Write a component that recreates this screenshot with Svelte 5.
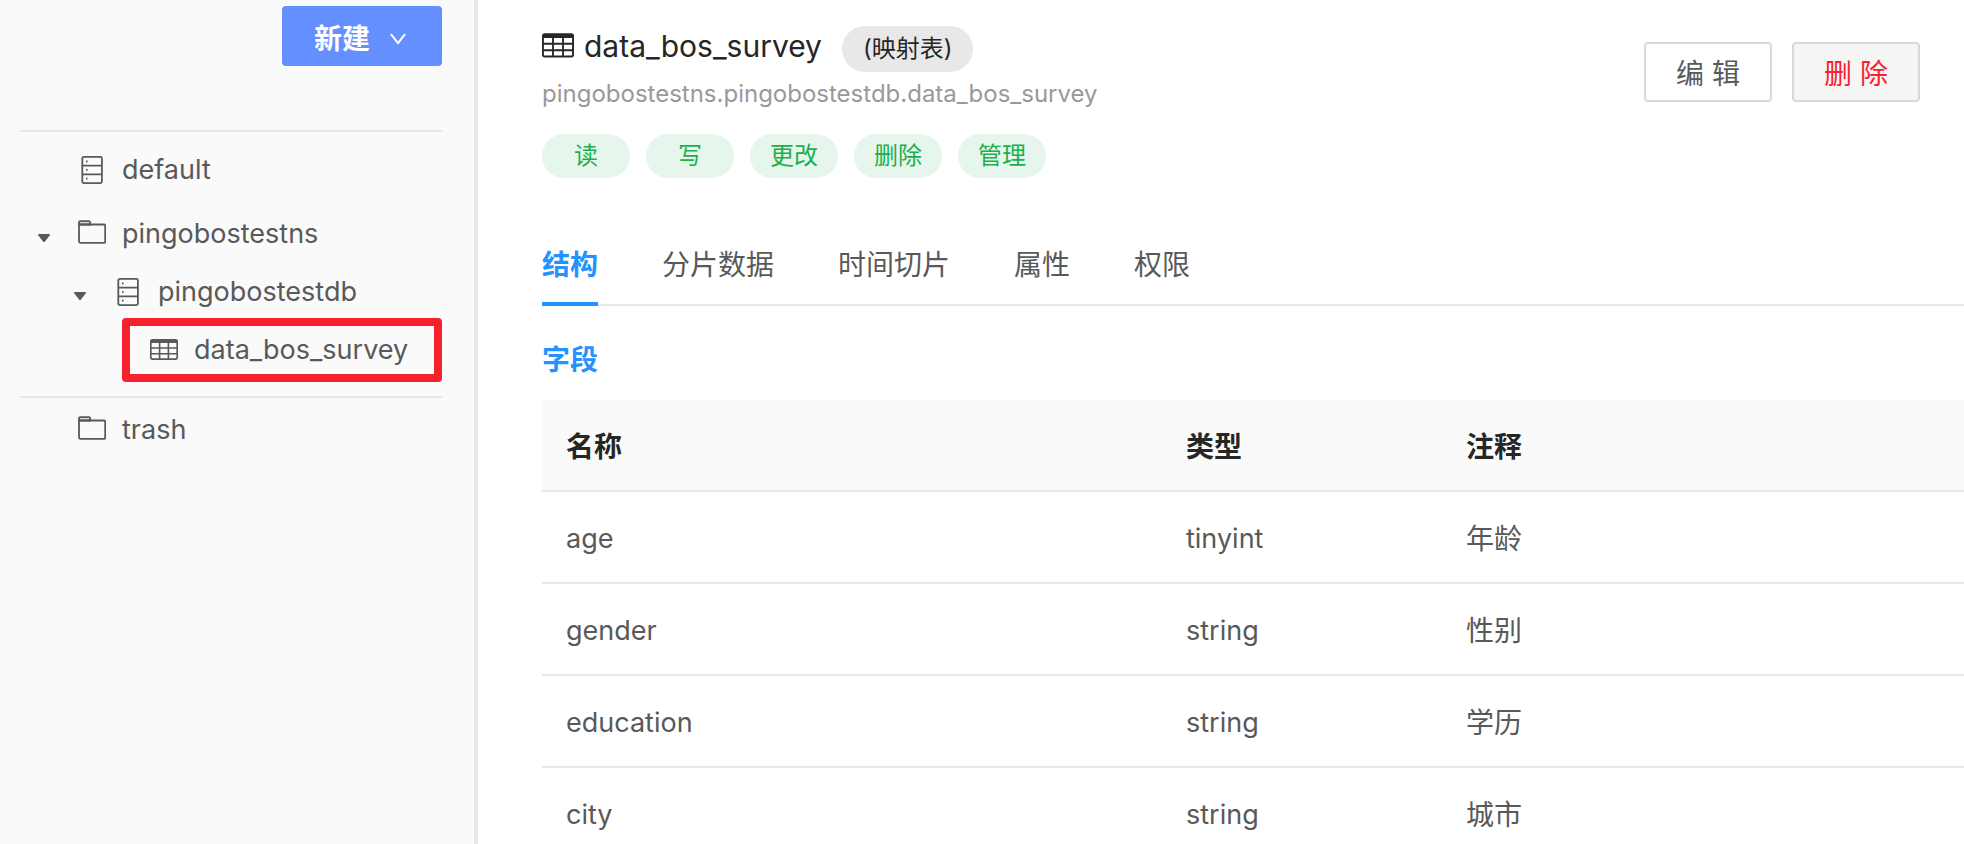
<script lang="ts">
    const tags = ["读", "写", "更改", "删除", "管理"];
    const tabs = ["结构", "分片数据", "时间切片", "属性", "权限"];
    const fields = [
        { name: "age", type: "tinyint", comment: "年龄" },
        { name: "gender", type: "string", comment: "性别" },
        { name: "education", type: "string", comment: "学历" },
        { name: "city", type: "string", comment: "城市" },
    ];

    let active = $state("结构");
    let nsOpen = $state(true);
    let dbOpen = $state(true);
</script>

{#snippet tableIcon(size)}
    <svg class="icon" width={size} height={size} viewBox="0 0 28 28" fill="none" stroke="currentColor" aria-hidden="true">
        <rect x="0.8" y="3.8" width="26.4" height="19.4" rx="1.5" stroke-width="1.7" />
        <path d="M1 5.3H27" stroke-width="3.4" />
        <path d="M1 12H27M1 17.7H27M9.6 6V23M18.4 6V23" stroke-width="1.6" />
    </svg>
{/snippet}

{#snippet folderIcon()}
    <svg class="icon" width="28" height="28" viewBox="0 0 28 28" fill="none" stroke="currentColor" stroke-width="1.8" aria-hidden="true">
        <path d="M1 5V2.5Q1 1.2 2.2 1.2H11Q12.2 1.2 12.2 2.5V4.5H1Z" fill="#ddd" />
        <path d="M1 4.5H26Q27.2 4.5 27.2 5.7V21.6Q27.2 22.8 26 22.8H2.2Q1 22.8 1 21.6Z" />
    </svg>
{/snippet}

{#snippet dbIcon()}
    <svg class="icon" width="28" height="28" viewBox="0 0 28 28" fill="none" stroke="currentColor" stroke-width="1.8" aria-hidden="true">
        <rect x="4.3" y="0.9" width="19.6" height="26.2" rx="1.5" />
        <path d="M4 9.7H24M4 18.3H24" />
        <path d="M8 5.4H9.6M8 13.9H9.6M8 22.6H9.6" />
    </svg>
{/snippet}

{#snippet caret()}
    <svg width="12" height="28" viewBox="0 0 12 28" fill="currentColor" aria-hidden="true">
        <path d="M0.6 14H11.4Q12.4 14.2 11.8 15.2L7 21.6Q6 22.6 5 21.6L0.2 15.2Q-0.4 14.2 0.6 14Z" />
    </svg>
{/snippet}

<div class="layout">
    <aside>
        <div class="toolbar">
            <button class="create">
                新建
                <svg width="16" height="12" viewBox="0 0 16 12" fill="none" stroke="currentColor" stroke-width="2" aria-hidden="true">
                    <path d="M1 1.2L8 10.2L15 1.2" />
                </svg>
            </button>
        </div>
        <ul class="tree">
            <li>
                <div class="row">
                    <span class="toggle"></span>
                    {@render dbIcon()}
                    <a href="#default">default</a>
                </div>
            </li>
            <li>
                <div class="row">
                    <button class="toggle" aria-label="pingobostestns" aria-expanded={nsOpen} onclick={() => (nsOpen = !nsOpen)}>
                        {@render caret()}
                    </button>
                    {@render folderIcon()}
                    <a href="#pingobostestns">pingobostestns</a>
                </div>
                {#if nsOpen}
                    <ul class="children">
                        <li>
                            <div class="row">
                                <button class="toggle" aria-label="pingobostestdb" aria-expanded={dbOpen} onclick={() => (dbOpen = !dbOpen)}>
                                    {@render caret()}
                                </button>
                                {@render dbIcon()}
                                <a href="#pingobostestdb">pingobostestdb</a>
                            </div>
                            {#if dbOpen}
                                <div class="row selected">
                                    {@render tableIcon(28)}
                                    <a href="#data_bos_survey">data_bos_survey</a>
                                </div>
                            {/if}
                        </li>
                    </ul>
                {/if}
            </li>
        </ul>
        <div class="row trash">
            <span class="toggle"></span>
            {@render folderIcon()}
            <a href="#trash">trash</a>
        </div>
    </aside>

    <main>
        <header>
            <div class="info">
                <div class="title">
                    <h1>
                        {@render tableIcon(32)}
                        data_bos_survey
                    </h1>
                    <span class="kind">(映射表)</span>
                </div>
                <div class="path">pingobostestns.pingobostestdb.data_bos_survey</div>
                <div class="tags">
                    {#each tags as tag}
                        <span class="tag">{tag}</span>
                    {/each}
                </div>
            </div>
            <div class="actions">
                <button>编 辑</button>
                <button class="danger">删 除</button>
            </div>
        </header>

        <div class="tabs" role="tablist">
            {#each tabs as tab}
                <button role="tab" class:active={tab === active} aria-selected={tab === active} onclick={() => (active = tab)}>{tab}</button>
            {/each}
        </div>

        <h2>字段</h2>
        <table>
            <thead>
                <tr>
                    <th class="name">名称</th>
                    <th class="type">类型</th>
                    <th>注释</th>
                </tr>
            </thead>
            <tbody>
                {#each fields as field}
                    <tr>
                        <td>{field.name}</td>
                        <td>{field.type}</td>
                        <td>{field.comment}</td>
                    </tr>
                {/each}
            </tbody>
        </table>
    </main>
</div>

<style>
    :global(body) {
        margin: 0;
    }

    .layout {
        display: flex;
        height: 100vh;
        font-family: Inter, "Noto Sans CJK SC", sans-serif;
        font-size: 27px;
        line-height: 40px;
        color: #595959;
        background: #fff;
    }

    button {
        font: inherit;
        color: inherit;
        cursor: pointer;
    }

    a {
        color: inherit;
        text-decoration: none;
    }

    .icon {
        flex: none;
    }

    aside {
        flex: none;
        box-sizing: border-box;
        width: 478px;
        padding: 6px 32px 0 20px;
        border-right: 4px solid #e8e8e8;
        background: #fafafa;
    }

    .toolbar {
        display: flex;
        justify-content: flex-end;
        padding-bottom: 64px;
    }

    .create {
        display: flex;
        align-items: center;
        gap: 20px;
        height: 60px;
        padding: 6px 36px 0 32px;
        border: 0;
        border-radius: 4px;
        background: #648fff;
        color: #fff;
        font-size: 28px;
        font-weight: 600;
    }

    ul {
        margin: 0;
        padding: 0;
        list-style: none;
    }

    .tree {
        display: flex;
        flex-direction: column;
        gap: 12px;
        padding: 12px 0 14px;
        border: solid #e8e8e8;
        border-width: 2px 0;
    }

    .children {
        padding: 6px 0 0 36px;
    }

    .row {
        display: flex;
        align-items: center;
        gap: 16px;
        height: 52px;
        padding-left: 18px;
    }

    .toggle {
        display: flex;
        flex: none;
        width: 12px;
        margin-right: 12px;
        padding: 0;
        border: 0;
        background: none;
    }

    .selected {
        height: 48px;
        margin-left: 66px;
        padding-left: 20px;
        border: 8px solid #f5222d;
        border-radius: 4px;
    }

    .trash {
        padding-top: 6px;
    }

    main {
        flex: 1;
        min-width: 0;
        overflow: auto;
        scrollbar-width: none;
        padding: 26px 0 0 64px;
    }

    header {
        display: flex;
        justify-content: space-between;
        align-items: flex-start;
        padding-right: 44px;
    }

    .title {
        display: flex;
        align-items: flex-start;
        gap: 20px;
        color: #262626;
    }

    h1 {
        display: flex;
        align-items: center;
        gap: 10px;
        margin: 0;
        font-size: 30px;
        font-weight: 400;
    }

    .kind {
        padding: 3px 21px;
        border-radius: 23px;
        background: #e8e8e8;
        font-size: 24px;
    }

    .path {
        margin-top: 2px;
        color: #999;
        font-size: 24px;
    }

    .tags {
        display: flex;
        gap: 16px;
        margin-top: 20px;
    }

    .tag {
        box-sizing: border-box;
        min-width: 88px;
        height: 44px;
        padding: 0 20px;
        border-radius: 22px;
        background: #e6f6ec;
        color: #1bb04b;
        font-size: 24px;
        line-height: 44px;
        text-align: center;
    }

    .actions {
        display: flex;
        gap: 20px;
        margin-top: 16px;
    }

    .actions button {
        width: 128px;
        height: 60px;
        padding: 4px 0 0;
        border: 2px solid #d9d9d9;
        border-radius: 4px;
        background: #fff;
        font-size: 28px;
    }

    .actions .danger {
        background: #f5f5f5;
        color: #f5222d;
    }

    .tabs {
        display: flex;
        gap: 64px;
        margin-top: 42px;
        border-bottom: 2px solid #e8e8e8;
    }

    .tabs button {
        height: 86px;
        margin-bottom: -2px;
        padding: 8px 0 0;
        border: 0;
        border-bottom: 4px solid transparent;
        background: none;
        font-size: 28px;
    }

    .tabs .active {
        border-color: #2692ff;
        color: #2692ff;
        font-weight: 600;
    }

    h2 {
        margin: 34px 0 20px;
        color: #2692ff;
        font-size: 28px;
        font-weight: 600;
    }

    table {
        width: 100%;
        border-collapse: separate;
        border-spacing: 0;
        table-layout: fixed;
    }

    th,
    td {
        box-sizing: border-box;
        height: 92px;
        padding: 4px 24px 0;
        border-bottom: 2px solid #e8e8e8;
        text-align: left;
    }

    th {
        background: #fafafa;
        color: #262626;
        font-size: 28px;
        font-weight: 600;
    }

    td:last-child {
        font-size: 28px;
    }

    .name {
        width: 620px;
    }

    .type {
        width: 280px;
    }
</style>
